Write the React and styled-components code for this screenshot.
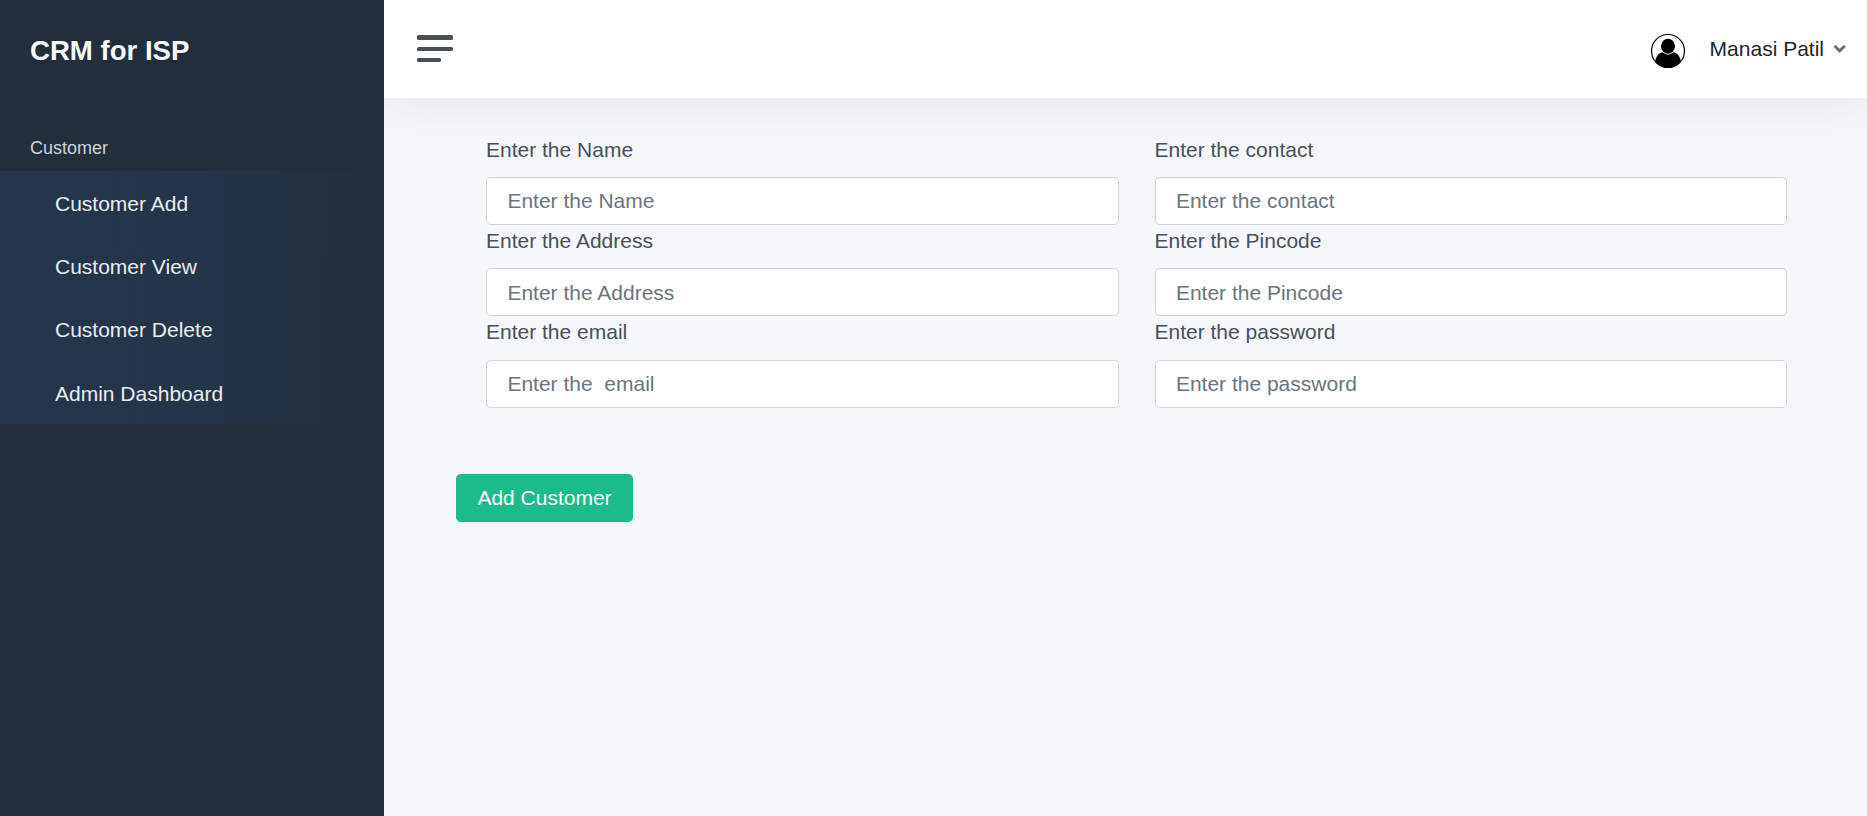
import React from "react";
import styled, { createGlobalStyle } from "styled-components";

const GlobalStyle = createGlobalStyle`
  *, *::before, *::after { box-sizing: border-box; }
  body {
    margin: 0;
    background: #f5f7fb;
    color: #495057;
    font-family: "Liberation Sans", Arial, sans-serif;
    font-size: 21px;
    line-height: 31.5px;
    overflow: hidden;
  }
`;

const Shell = styled.div`
  display: flex;
  height: 100vh;
`;

const Sidebar = styled.nav`
  flex: 0 0 384px;
  background: #222e3c;
`;

const Brand = styled.div`
  padding: 30px 30px 0;
  height: 129px;
  color: #f8f9fa;
  font-size: 27.6px;
  font-weight: 600;
  line-height: 41.4px;
`;

const SectionTitle = styled.div`
  height: 42px;
  padding: 6px 30px 0;
  color: #ced4da;
  font-size: 18px;
  line-height: 27px;
`;

const Menu = styled.ul`
  margin: 0;
  padding: 0;
  list-style: none;
  background: linear-gradient(
    90deg,
    rgba(59, 125, 221, 0.1) 0%,
    rgba(59, 125, 221, 0.088) 50%,
    transparent 100%
  );
`;

const MenuItem = styled.li`
  height: 63.25px;
  padding: 16.9px 0 0 55px;
  color: #e9ecef;
`;

const Main = styled.div`
  flex: 1;
  min-width: 0;
  display: flex;
  flex-direction: column;
  overflow: hidden;
`;

const Topbar = styled.header`
  display: flex;
  justify-content: space-between;
  height: 98px;
  background: #fff;
  box-shadow: 0 0 48px 0 rgba(33, 37, 41, 0.1);
`;

const Burger = styled.div`
  display: flex;
  flex-direction: column;
  padding: 35px 0 0 33px;
`;

const Bar = styled.span`
  width: ${(p) => p.$w}px;
  height: ${(p) => p.$h}px;
  margin-bottom: 7px;
  border-radius: 1.5px;
  background: #495057;
`;

const User = styled.div`
  display: flex;
  align-items: flex-start;
  padding: 33px 20px 0 0;
  color: #212529;
`;

const Avatar = styled.svg`
  width: 36px;
  height: 36px;
  margin-right: 23.5px;
`;

const Chevron = styled.svg`
  width: 14px;
  height: 10px;
  margin: 11px 0 0 9px;
`;

const Form = styled.form`
  padding: 35.7px 80px 0 72px;
`;

const Fields = styled.div`
  display: grid;
  grid-template-columns: 1fr 1fr;
  column-gap: 36px;
  padding-left: 30px;
`;

const Field = styled.label`
  display: block;
  height: 91.3px;
`;

const Input = styled.input`
  display: block;
  width: 100%;
  height: 48px;
  margin-top: 11.9px;
  padding: 0.25px 20.4px 0;
  border: 1px solid #ced4da;
  border-radius: 4.8px;
  background: #fff;
  font: inherit;
  &::placeholder { color: #6c757d; opacity: 1; }
`;

const Submit = styled.button`
  display: block;
  width: 177px;
  height: 48px;
  margin-top: 66.4px;
  padding: 0;
  border: 0;
  border-radius: 4.8px;
  background: #1cbb8c;
  color: #fff;
  font: inherit;
`;

const links = ["Customer Add", "Customer View", "Customer Delete", "Admin Dashboard"];

const fields = [
  { label: "Enter the Name" },
  { label: "Enter the contact" },
  { label: "Enter the Address" },
  { label: "Enter the Pincode" },
  { label: "Enter the email", placeholder: "Enter the  email" },
  { label: "Enter the password", type: "password" },
];

export default function App() {
  return (
    <>
      <GlobalStyle />
      <Shell>
        <Sidebar>
          <Brand>CRM for ISP</Brand>
          <SectionTitle>Customer</SectionTitle>
          <Menu>
            {links.map((l) => (
              <MenuItem key={l}>{l}</MenuItem>
            ))}
          </Menu>
        </Sidebar>
        <Main>
          <Topbar>
            <Burger>
              <Bar $w={36} $h={5} />
              <Bar $w={36} $h={4} />
              <Bar $w={24} $h={4} />
            </Burger>
            <User>
              <Avatar viewBox="0 0 36 36">
                <clipPath id="face">
                  <circle cx="18" cy="18" r="17" />
                </clipPath>
                <g clipPath="url(#face)">
                  <path d="M5 36V30C5.500 24 8 20.500 12.500 19.300Q18 24 23.500 19.300C28 20.500 30.500 24 31 30V36Z" />
                  <ellipse cx="18" cy="13.200" rx="7" ry="7.500" />
                </g>
                <circle cx="18" cy="18" r="16.500" fill="none" stroke="#000" strokeWidth="1.200" />
              </Avatar>
              <span>Manasi Patil</span>
              <Chevron viewBox="0 0 14 10">
                <path d="M1.500 1.800L6.700 6.900L11.900 1.800" fill="none" stroke="#6f7275" strokeWidth="3" />
              </Chevron>
            </User>
          </Topbar>
          <Form>
            <Fields>
              {fields.map((f) => (
                <Field key={f.label}>
                  {f.label}
                  <Input type={f.type || "text"} placeholder={f.placeholder || f.label} />
                </Field>
              ))}
            </Fields>
            <Submit type="button">Add Customer</Submit>
          </Form>
        </Main>
      </Shell>
    </>
  );
}
